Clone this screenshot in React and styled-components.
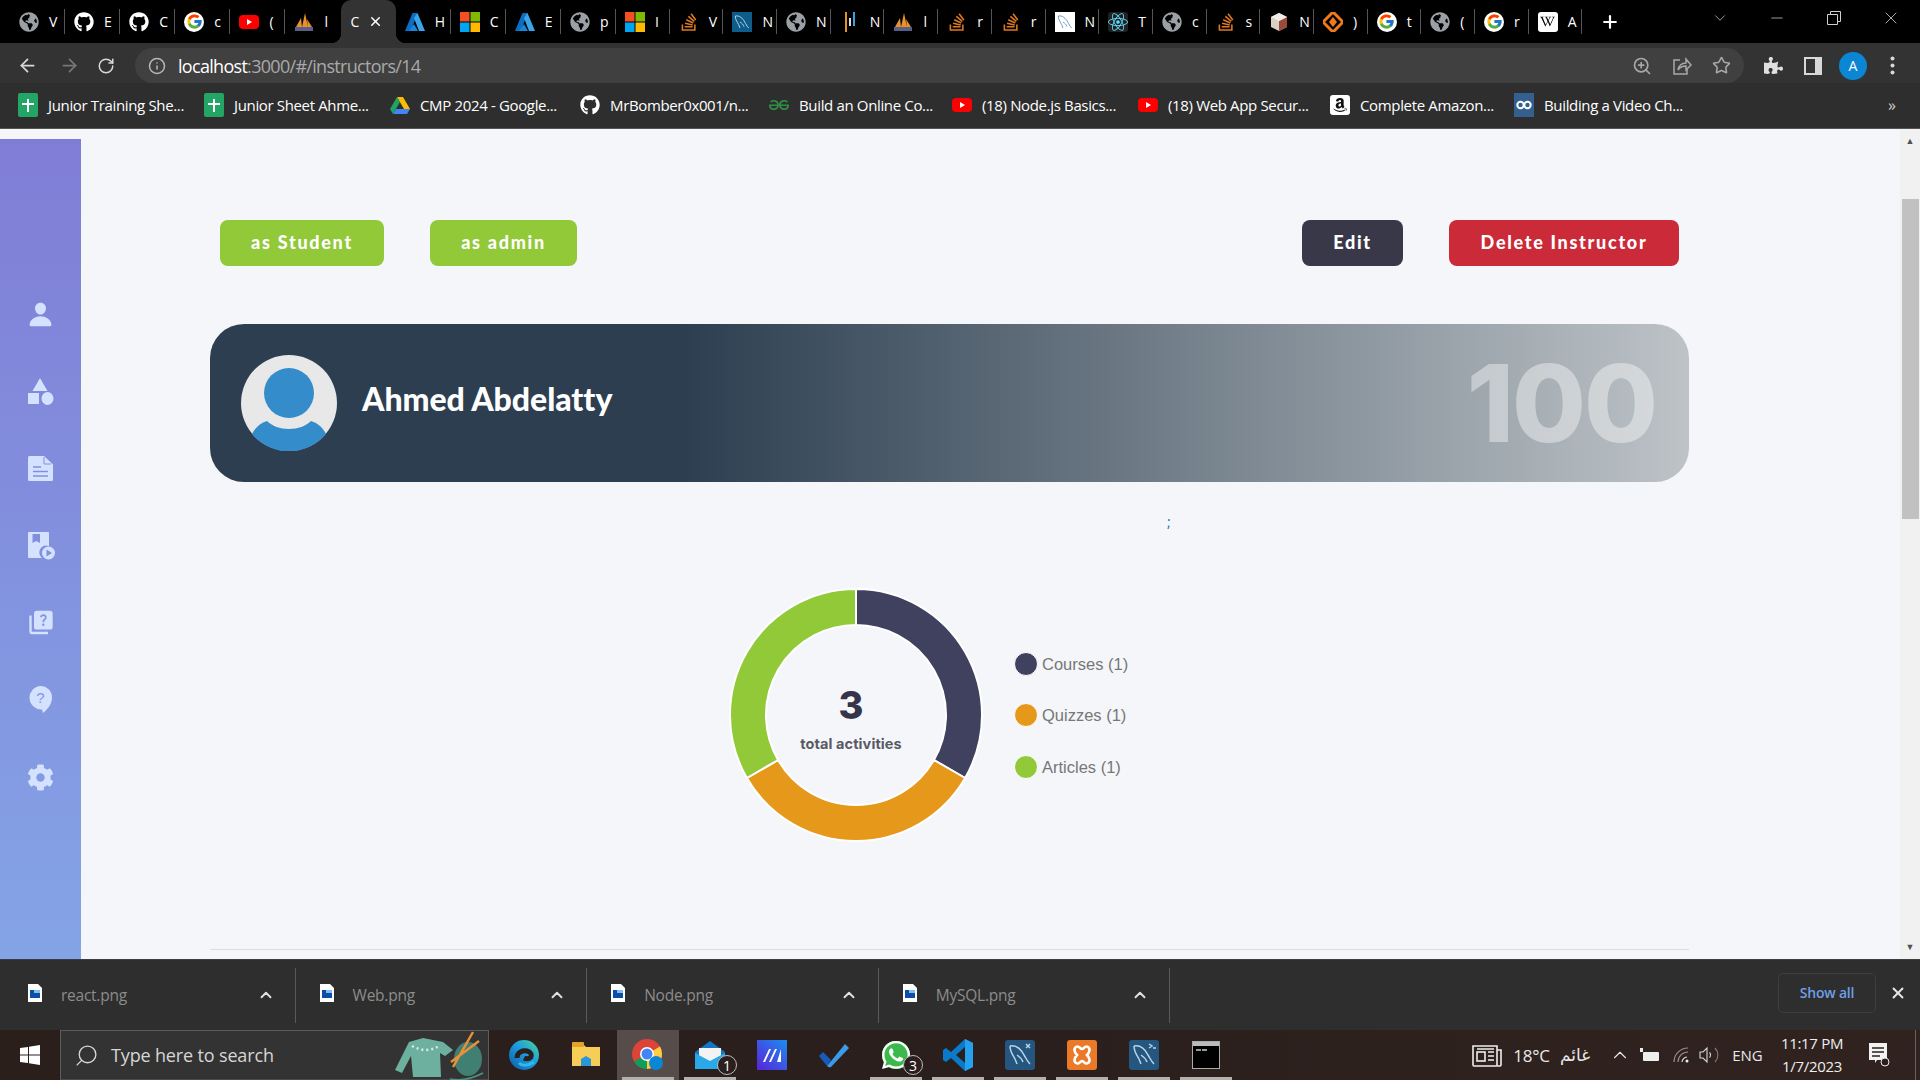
import React from 'react';
import styled, { createGlobalStyle } from 'styled-components';
import { ArrowLeft, ArrowRight, RotateCw, Info, ZoomIn, Star, Plus, X, ChevronDown, ChevronUp, Minus, Search } from 'lucide-react';
import { FaGithub, FaGlobeAmericas, FaStackOverflow, FaReact, FaWikipediaW, FaAmazon, FaPuzzlePiece, FaCog, FaWhatsapp } from 'react-icons/fa';
import { FcGoogle } from 'react-icons/fc';
import { SiGeeksforgeeks } from 'react-icons/si';
import { IoPerson } from 'react-icons/io5';
import { MdQuiz } from 'react-icons/md';

const GlobalStyle = createGlobalStyle`
  html, body { margin: 0; padding: 0; height: 100%; overflow: hidden; background: #f4f6fa; }
  * { box-sizing: border-box; }
`;

// ---------- browser chrome ----------
const Screen = styled.div`
  width: 1920px;
  height: 1080px;
  display: flex;
  flex-direction: column;
  overflow: hidden;
  font-family: 'Open Sans', 'Liberation Sans', sans-serif;
`;

const TabStrip = styled.div`
  height: 43px;
  background: #000;
  display: flex;
  padding-left: 10px;
  flex-shrink: 0;
  position: relative;
`;

const Tab = styled.div`
  width: ${(p) => p.$w || 55.1}px;
  height: 43px;
  display: flex;
  align-items: center;
  padding: 0 0 0 9px;
  gap: 10px;
  position: relative;
  color: #fff;
  font-size: 14px;
  flex-shrink: 0;
  &::after {
    content: '';
    display: ${(p) => (p.$noSep ? 'none' : 'block')};
    position: absolute;
    right: 0;
    top: 9px;
    bottom: 9px;
    width: 1px;
    background: #555;
  }
`;

const ActiveTab = styled(Tab)`
  background: #333;
  border-radius: 10px 10px 0 0;
  padding: 0 13px 0 10px;
  justify-content: space-between;
  gap: 0;
  &::before,
  &::after {
    content: '';
    display: block;
    position: absolute;
    top: auto;
    bottom: 0;
    width: 10px;
    height: 10px;
    background: none;
  }
  &::before {
    left: -10px;
    background: radial-gradient(circle at 0 0, transparent 10px, #333 10.5px);
  }
  &::after {
    right: -10px;
    background: radial-gradient(circle at 100% 0, transparent 10px, #333 10.5px);
  }
`;

const Favicon = styled.span`
  width: 20px;
  height: 20px;
  flex-shrink: 0;
  display: flex;
  align-items: center;
  justify-content: center;
  border-radius: ${(p) => p.$radius || 0};
  background: ${(p) => p.$bg || 'transparent'};
  color: ${(p) => p.$color || '#fff'};
  font-size: ${(p) => p.$size || 20}px;
`;

const TabLetter = styled.span`
  white-space: nowrap;
  line-height: 1;
`;

const NewTab = styled.div`
  width: 56px;
  display: flex;
  align-items: center;
  justify-content: center;
  color: #fff;
`;

const WindowControls = styled.div`
  margin-left: auto;
  display: flex;
  align-items: flex-start;
  color: #d0d0d0;
  padding-right: 1px;
`;

const WinButton = styled.div`
  width: 57px;
  height: 36px;
  display: flex;
  align-items: center;
  justify-content: center;
`;

const Toolbar = styled.div`
  height: 40px;
  background: #333;
  display: flex;
  align-items: flex-end;
  flex-shrink: 0;
  color: #d8d8d8;
`;

const NavButton = styled.div`
  width: ${(p) => p.$w || 41}px;
  height: 35px;
  display: flex;
  align-items: center;
  justify-content: center;
  color: ${(p) => p.$color || '#d8d8d8'};
`;

const UrlPill = styled.div`
  width: 1609px;
  height: 35px;
  margin-left: 7px;
  background: #404040;
  border-radius: 18px;
  display: flex;
  align-items: center;
  padding: 0 3px 0 13px;
`;

const UrlText = styled.div`
  margin-left: 12px;
  font-size: 18px;
  letter-spacing: -0.7px;
  color: #a9a9a9;
  flex: 1;
  line-height: 1;
  b { font-weight: 400; color: #fff; }
`;

const ToolbarEnd = styled.div`
  display: flex;
  padding-left: 9px;
`;

const Avatar = styled.div`
  width: 28px;
  height: 28px;
  border-radius: 50%;
  background: #0b86d4;
  color: #fff;
  font-size: 14px;
  display: flex;
  align-items: center;
  justify-content: center;
`;

const BookmarkBar = styled.div`
  height: 46px;
  background: #2e2e2e;
  border-bottom: 1px solid #555;
  display: flex;
  align-items: center;
  padding: 0 0 1px 18px;
  flex-shrink: 0;
  position: relative;
`;

const Bookmark = styled.div`
  width: ${(p) => p.$w}px;
  display: flex;
  align-items: center;
  gap: 10px;
  color: #fff;
  font-size: 15px;
  letter-spacing: -0.35px;
  white-space: nowrap;
  flex-shrink: 0;
`;

const OverflowMark = styled.div`
  margin-left: auto;
  margin-right: 24px;
  color: #ccc;
  font-size: 16px;
`;

// ---------- page ----------
const PageArea = styled.div`
  flex: 1;
  min-height: 0;
  display: flex;
  background: #f4f6fa;
`;

const Sidebar = styled.nav`
  width: 81px;
  margin-top: 10px;
  flex-shrink: 0;
  background: linear-gradient(180deg, #807dd6 0%, #84a4e6 100%);
  display: flex;
  flex-direction: column;
  align-items: center;
  padding-top: 161px;
  gap: 49.2px;
  color: #d4e2ff;
`;

const SideIcon = styled.div`
  width: 28px;
  height: 28px;
  display: flex;
  align-items: center;
  justify-content: center;
  font-size: ${(p) => p.$size || 27}px;
`;

const Content = styled.main`
  flex: 1;
  min-width: 0;
  padding: 91px 211px 0 129px;
  display: flex;
  flex-direction: column;
  overflow: hidden;
`;

const ButtonRow = styled.div`
  display: flex;
  padding: 0 10px;
  gap: 46px;
`;

const ActionButton = styled.button`
  height: 46px;
  width: ${(p) => p.$w}px;
  margin-left: ${(p) => (p.$push ? 'auto' : '0')};
  border: none;
  border-radius: 8px;
  background: ${(p) => p.$bg};
  color: #fff;
  font-family: 'Lato', sans-serif;
  font-weight: 900;
  font-size: 18px;
  letter-spacing: 1.7px;
  padding: 0 0 2px;
`;

const Banner = styled.section`
  margin-top: 58px;
  height: 158px;
  flex-shrink: 0;
  border-radius: 34px;
  background: linear-gradient(90deg, #2c3e50 32%, #bdc3c7 100%);
  display: flex;
  align-items: center;
  padding: 0 33px 0 31px;
`;

const BannerAvatar = styled.svg`
  width: 96px;
  height: 96px;
  flex-shrink: 0;
`;

const BannerName = styled.h1`
  margin: 0 0 9px 25px;
  font-family: 'Lato', sans-serif;
  font-weight: 900;
  font-size: 32px;
  letter-spacing: -0.05px;
  color: #fff;
`;

const BannerScore = styled.div`
  margin-left: auto;
  font-family: 'Inter', sans-serif;
  font-weight: 800;
  font-size: 107px;
  line-height: 1;
  letter-spacing: -2px;
  color: rgba(255, 255, 255, 0.4);
`;

const StrayMark = styled.div`
  margin-top: 32px;
  height: 16px;
  padding-left: 957px;
  font-size: 14px;
  line-height: 16px;
  color: #1a6fa8;
`;

const ChartRow = styled.div`
  margin-top: 57px;
  padding-left: 518px;
  display: flex;
  align-items: center;
`;

const DonutWrap = styled.div`
  width: 256px;
  height: 256px;
  position: relative;
  flex-shrink: 0;
`;

const DonutCenter = styled.div`
  position: absolute;
  left: 0;
  right: 10px;
  top: 96px;
  display: flex;
  flex-direction: column;
  align-items: center;
`;

const DonutTotal = styled.div`
  font-family: 'Inter', sans-serif;
  font-weight: 800;
  font-size: 38px;
  line-height: 44px;
  color: #36344a;
`;

const DonutCaption = styled.div`
  margin-top: 8px;
  font-family: 'Inter', sans-serif;
  font-weight: 700;
  font-size: 14.5px;
  letter-spacing: 0.1px;
  line-height: 18px;
  color: #5a5a66;
`;

const Legend = styled.div`
  margin: 0 0 0 30px;
  display: flex;
  flex-direction: column;
  gap: 27.5px;
`;

const LegendItem = styled.div`
  display: flex;
  align-items: center;
  gap: 4px;
  font-family: 'Liberation Sans', sans-serif;
  font-size: 16.5px;
  line-height: 24px;
  color: #777;
`;

const LegendDot = styled.span`
  width: 24px;
  height: 24px;
  border-radius: 50%;
  border: 1px solid #fff;
  background: ${(p) => p.$color};
`;

const Divider = styled.hr`
  margin: 106px 0 0;
  border: none;
  border-top: 1px solid #dcdee3;
  flex-shrink: 0;
`;

const Scrollbar = styled.div`
  width: 20px;
  flex-shrink: 0;
  background: #f1f1f1;
  display: flex;
  flex-direction: column;
  align-items: center;
`;

const ScrollArrow = styled.div`
  height: ${(p) => p.$h}px;
  display: flex;
  align-items: ${(p) => (p.$end ? 'flex-end' : 'flex-start')};
  padding: ${(p) => (p.$end ? '0 0 8px' : '7px 0 0')};
  color: #505050;
  font-size: 9px;
  line-height: 1;
`;

const ScrollThumb = styled.div`
  width: 17px;
  height: 320px;
  background: #c1c1c1;
  flex-shrink: 0;
`;

// ---------- downloads shelf ----------
const DownloadBar = styled.div`
  height: 71px;
  background: #2e2e2e;
  border-top: 1px solid #3e3e3e;
  display: flex;
  align-items: center;
  padding-left: 4px;
  flex-shrink: 0;
`;

const DownloadItem = styled.div`
  width: 291.6px;
  height: 55px;
  border-right: 1px solid #5a5a5a;
  display: flex;
  align-items: center;
  padding: 0 20px 0 24px;
  color: #8c8c8c;
  font-size: 15.5px;
  letter-spacing: -0.25px;
`;

const DownloadName = styled.span`
  margin-left: 19px;
  flex: 1;
`;

const FileGlyph = styled.svg`
  width: 14px;
  height: 18px;
  margin-top: -4px;
  flex-shrink: 0;
`;

const ShowAll = styled.div`
  margin-left: auto;
  width: 98px;
  height: 40px;
  margin-top: -5px;
  border: 1px solid #3e3e3e;
  border-radius: 5px;
  display: flex;
  align-items: center;
  justify-content: center;
  color: #6f9fe8;
  font-size: 14px;
  font-weight: 600;
  letter-spacing: -0.2px;
`;

const ShelfClose = styled.div`
  width: 44px;
  margin-top: -5px;
  display: flex;
  justify-content: center;
  color: #e6e6e6;
`;

// ---------- windows taskbar ----------
const Taskbar = styled.div`
  height: 50px;
  background: linear-gradient(90deg, #2b1f1c 0%, #2b1f1d 50%, #30231f 100%);
  display: flex;
  align-items: stretch;
  flex-shrink: 0;
  color: #eee;
`;

const StartButton = styled.div`
  width: 60px;
  display: flex;
  align-items: center;
  justify-content: center;
`;

const SearchBox = styled.div`
  width: 429px;
  background: #333;
  border: 1px solid #5c5c5c;
  border-bottom-color: #4a4a4a;
  display: flex;
  align-items: center;
  padding-left: 13px;
  color: #d6d6d6;
  font-size: 18px;
  letter-spacing: -0.15px;
  position: relative;
`;

const SearchLabel = styled.span`
  margin-left: 12px;
`;

const SearchArt = styled.svg`
  margin-left: auto;
  margin-right: 3px;
  width: 92px;
  height: 50px;
`;

const TaskSlots = styled.div`
  display: flex;
  margin-left: 4px;
`;

const TaskSlot = styled.div`
  width: 62px;
  display: flex;
  align-items: center;
  justify-content: center;
  position: relative;
  background: ${(p) => (p.$active ? '#564c4a' : 'transparent')};
  &::after {
    content: '';
    display: ${(p) => (p.$open ? 'block' : 'none')};
    position: absolute;
    bottom: 0;
    left: 5px;
    right: 5px;
    height: 3px;
    background: #b3b0ae;
  }
`;

const TaskBadge = styled.span`
  position: absolute;
  right: 4px;
  bottom: 5px;
  width: 20px;
  height: 20px;
  border-radius: 50%;
  background: #2b1f1d;
  border: 1px solid #bbb;
  color: #fff;
  font-size: 14px;
  display: flex;
  align-items: center;
  justify-content: center;
`;

const WhatsappMark = styled.span`
  width: 32px;
  height: 32px;
  border-radius: 50%;
  display: flex;
  align-items: center;
  justify-content: center;
  color: #fff;
  background: radial-gradient(circle, #3cb94c 0 62%, transparent 64%);
`;

const Tray = styled.div`
  margin-left: auto;
  display: flex;
  align-items: center;
  border-right: 1px solid #6b6260;
  margin-right: 4px;
  font-size: 15px;
`;

const TrayItem = styled.div`
  display: flex;
  align-items: center;
  justify-content: center;
  width: ${(p) => p.$w}px;
  margin-left: ${(p) => p.$ml || 0}px;
  color: #e8e8e8;
  white-space: nowrap;
`;

const Temperature = styled(TrayItem)`
  font-size: 17px;
  letter-spacing: -0.2px;
`;

const WeatherWord = styled.span`
  font-family: 'DejaVu Sans', sans-serif;
  font-size: 17px;
`;

const Clock = styled.div`
  display: flex;
  flex-direction: column;
  align-items: center;
  gap: 4px;
  width: 62px;
  margin-left: 13.5px;
  font-size: 15px;
  letter-spacing: -0.3px;
  line-height: 19px;
  white-space: nowrap;
`;

// ---------- drawn icons ----------
const MsGrid = () => (
  <svg width="20" height="20" viewBox="0 0 20 20">
    <rect width="9.5" height="9.5" fill="#f25022" />
    <rect x="10.5" width="9.5" height="9.5" fill="#7fba00" />
    <rect y="10.5" width="9.5" height="9.5" fill="#00a4ef" />
    <rect x="10.5" y="10.5" width="9.5" height="9.5" fill="#ffb900" />
  </svg>
);

const Azure = () => (
  <svg width="20" height="20" viewBox="0 0 20 20">
    <path d="M7.5 1h5L6 19H0z" fill="#0a6fc2" />
    <path d="M12.5 1 20 19h-6L9 6z" fill="#3aa5ea" />
    <path d="M9 12l4 7H4z" fill="#1887d8" />
  </svg>
);

const Pma = () => (
  <svg width="20" height="20" viewBox="0 0 20 20">
    <path d="M2 15 7 6l1 9zM8 15l3-14 3 14zM14 15l-1-8 5 8z" fill="#e8912d" />
    <rect x="1" y="15" width="18" height="4" fill="#5a5f8a" />
  </svg>
);

const Bars = () => (
  <svg width="20" height="20" viewBox="0 0 20 20">
    <rect x="5" y="0" width="2" height="20" fill="#e3932a" />
    <rect x="9" y="6" width="2" height="8" fill="#dddddd" />
    <rect x="13" y="0" width="2" height="14" fill="#3aa0d8" />
  </svg>
);

const Diamond = () => (
  <svg width="20" height="20" viewBox="0 0 20 20">
    <path d="M10 0 20 10 10 20 0 10z" fill="none" stroke="#f27a1a" strokeWidth="3" />
    <path d="M10 5 14 10 10 15 6 10z" fill="#f27a1a" />
  </svg>
);

const PackageBox = () => (
  <svg width="20" height="20" viewBox="0 0 20 20">
    <path d="M10 1 18 5v10l-8 4-8-4V5z" fill="#d8cfc6" />
    <path d="M10 9v10l8-4V5z" fill="#9a4a3a" />
    <path d="M2 5l8 4 8-4-8-4z" fill="#f0ece6" />
  </svg>
);

const YouTube = () => (
  <svg width="20" height="20" viewBox="0 0 20 20">
    <rect x="0" y="3" width="20" height="14" rx="4" fill="#f00" />
    <path d="M8 7l5 3-5 3z" fill="#fff" />
  </svg>
);

const Sheets = () => (
  <svg width="20" height="24" viewBox="0 0 20 24">
    <rect width="20" height="24" rx="2" fill="#23a566" />
    <path d="M9 6h2v4h5v2h-5v7H9v-7H4v-2h5z" fill="#fff" />
  </svg>
);

const Drive = () => (
  <svg width="20" height="20" viewBox="0 0 20 20">
    <path d="M7 2h6l7 12h-6z" fill="#fbbc04" />
    <path d="M7 2 0 14l3 5 7-12z" fill="#1fa463" />
    <path d="M3 19h14l3-5H6z" fill="#4285f4" />
  </svg>
);

const Infinity2 = () => (
  <svg width="20" height="24" viewBox="0 0 20 24">
    <rect width="20" height="24" fill="#34608f" />
    <circle cx="6.5" cy="12" r="3.2" fill="none" stroke="#fff" strokeWidth="2" />
    <circle cx="13.5" cy="12" r="3.2" fill="none" stroke="#fff" strokeWidth="2" />
  </svg>
);

const ShareIcon = () => (
  <svg width="20" height="20" viewBox="0 0 20 20" fill="none" stroke="#a8a8a8" strokeWidth="1.5">
    <path d="M8 4H2v14h13v-5" />
    <path d="M6 14c1-5 4-7 8-7V3l5 6-5 5v-4c-3 0-6 1-8 4z" />
  </svg>
);

const SidePanel = () => (
  <svg width="18" height="18" viewBox="0 0 18 18">
    <rect x="1" y="1" width="16" height="16" fill="none" stroke="#d8d8d8" strokeWidth="2" />
    <rect x="11" y="1" width="6" height="16" fill="#d8d8d8" />
  </svg>
);

const ShapesIcon = () => (
  <svg width="26" height="27" viewBox="0 0 26 27" fill="currentColor">
    <path d="M12 0l7.5 13h-15z" />
    <rect x="0" y="15" width="11" height="11" />
    <ellipse cx="19.5" cy="20.5" rx="6" ry="6.5" />
  </svg>
);

const PageIcon = () => (
  <svg width="25" height="25" viewBox="0 0 25 25">
    <path d="M1.5 0H16l9 8.5V23.5a1.5 1.5 0 0 1-1.5 1.5h-22A1.5 1.5 0 0 1 0 23.5v-22A1.5 1.5 0 0 1 1.5 0z" fill="currentColor" />
    <path d="M16 1v7h7" fill="none" stroke="#8090dd" strokeWidth="1" />
    <path d="M5 11h8M5 15.5h15M5 20h15" stroke="#8090dd" strokeWidth="1.6" />
  </svg>
);

const BookPlay = () => (
  <svg width="28" height="28" viewBox="0 0 28 28">
    <path d="M2 0h19a1 1 0 0 1 1 1v13a7 7 0 0 0-7 12H2a1 1 0 0 1-1-1V1a1 1 0 0 1 1-1z" fill="currentColor" />
    <path d="M5.5 2h7.5v9l-3.7-2-3.8 2z" fill="#8090dd" />
    <circle cx="21.5" cy="21" r="6.5" fill="currentColor" />
    <path d="M19.5 17.5 25 21l-5.5 3.5z" fill="#8090dd" />
  </svg>
);

const QuestionBubble = () => (
  <svg width="24" height="28" viewBox="0 0 24 28">
    <path d="M11.5 0a11.5 11.5 0 0 1 11.5 11.5c0 7-5 12.5-9 15.5l-1-3.6a11.5 11.5 0 1 1-1.5-23.4z" fill="currentColor" />
    <text x="11.5" y="17" textAnchor="middle" fontSize="15" fontFamily="Liberation Sans, sans-serif" fill="#8097e0">?</text>
  </svg>
);

const AvatarArt = () => (
  <BannerAvatar viewBox="0 0 96 96">
    <circle cx="48" cy="48" r="48" fill="#e8e8e8" />
    <ellipse cx="48" cy="38" rx="25" ry="25" fill="#358ccb" />
    <path d="M11 79c3-6 8-11 15-13 5 5 13 8 22 8s17-3 22-8c7 2 12 7 15 13a48 48 0 0 1-74 0z" fill="#358ccb" />
  </BannerAvatar>
);

const WindowsLogo = () => (
  <svg width="20" height="20" viewBox="0 0 20 20" fill="#fff">
    <path d="M0 3l8-1v7.5H0zM9 1.8 20 0v9.5H9zM0 10.5h8V18l-8-1zM9 10.5h11V20L9 18.2z" />
  </svg>
);

const SweaterArt = () => (
  <SearchArt viewBox="0 0 92 50">
    <path d="M2 40 16 12l14-4 5 1 15 3 10 8-8 6-5-3 1 24H20l-2-21-9 17z" fill="#6db09f" />
    <path d="M19 16q14 8 27 0" fill="none" stroke="#d8ece6" strokeWidth="2.5" strokeDasharray="2 3" />
    <ellipse cx="75" cy="29" rx="14" ry="17" fill="#417f72" />
    <path d="M60 37 80 2M58 32 86 11" stroke="#e8913a" strokeWidth="2.5" />
    <path d="M57 49q16 3 33-6" fill="none" stroke="#4d9485" strokeWidth="1.5" />
  </SearchArt>
);

const EdgeLogo = () => (
  <svg width="30" height="30" viewBox="0 0 30 30">
    <defs>
      <linearGradient id="edgeG" x1="0" y1="1" x2="1" y2="0">
        <stop offset="0" stopColor="#0c59a4" />
        <stop offset="0.55" stopColor="#1b9de2" />
        <stop offset="1" stopColor="#4ad98f" />
      </linearGradient>
    </defs>
    <circle cx="15" cy="15" r="15" fill="url(#edgeG)" />
    <path d="M8 18c0-6 6-8 10-7 4 1 5 4 4 6-2 2-5 2-7 1" fill="none" stroke="#2b1f1d" strokeWidth="5" />
    <path d="M10 23c3 3 9 3 15-1" fill="none" stroke="#34b6e8" strokeWidth="3" />
  </svg>
);

const FolderLogo = () => (
  <svg width="28" height="26" viewBox="0 0 28 26">
    <path d="M0 2h11l3 3h14v19H0z" fill="#f6cd57" />
    <rect y="0" width="12" height="5" rx="1" fill="#e0a526" />
    <path d="M9 24v-7l5-3 5 3v7z" fill="#2b97d8" />
  </svg>
);

const ChromeLogo = () => (
  <svg width="32" height="32" viewBox="0 0 32 32">
    <circle cx="15" cy="15" r="15" fill="#db4437" />
    <path d="M15 15 2 22.5A15 15 0 0 0 15 30z" fill="#0f9d58" />
    <path d="M15 15v15a15 15 0 0 0 15-15 15 15 0 0 0-2-7.5z" fill="#ffcd40" />
    <circle cx="15" cy="15" r="7" fill="#fff" />
    <circle cx="15" cy="15" r="5.5" fill="#4285f4" />
    <circle cx="24" cy="24" r="7" fill="#0b86d4" />
  </svg>
);

const MailLogo = () => (
  <svg width="30" height="28" viewBox="0 0 30 28">
    <path d="M0 11 15 0l15 11v17H0z" fill="#1276c4" />
    <path d="M4 7h22v8l-11 6-11-6z" fill="#f3f3f3" />
    <path d="M0 12l15 8 15-8v16H0z" fill="#29a8ea" />
  </svg>
);

const MaLogo = () => (
  <svg width="30" height="30" viewBox="0 0 30 30">
    <defs>
      <linearGradient id="maG" x1="0" y1="1" x2="1" y2="0">
        <stop offset="0" stopColor="#5a22d8" />
        <stop offset="1" stopColor="#1c8cf0" />
      </linearGradient>
    </defs>
    <rect width="30" height="30" fill="url(#maG)" />
    <path d="M6 22 12 9h2L8 22zM12 22l6-13h2l-6 13zM20 22l4-13v13z" fill="#fff" />
  </svg>
);

const TodoLogo = () => (
  <svg width="30" height="26" viewBox="0 0 30 26">
    <path d="M0 14 4 10l8 8-4 6z" fill="#195abd" />
    <path d="M8 24 26 2l4 4-18 19q-2 1-4-1z" fill="#3a9be8" />
  </svg>
);

const VsCodeLogo = () => (
  <svg width="30" height="32" viewBox="0 0 30 32">
    <path d="M22 0 30 4v24l-8 4L8 19l-5 4-3-2v-10l3-2 5 4z" fill="#0a7acb" />
    <path d="M22 8 13 16l9 8z" fill="#2b1f1d" />
    <path d="M22 0 30 4v24l-8 4z" fill="#24a0ed" />
  </svg>
);

// dolphin outline, shared by the tab favicons and the taskbar tiles
const Dolphin = ({ stroke = '#b9d3e6', children }) => (
  <svg width="100%" height="100%" viewBox="0 0 30 30" fill="none" stroke={stroke} strokeWidth="1.5">
    <path d="M5 6c6-1 11 3 14 9 2 3 3 6 6 9" />
    <path d="M5 6c0 6 3 9 5 13l2 5M12 15c3 2 5 4 6 7" />
    {children}
  </svg>
);

const MysqlTile = ({ children }) => (
  <svg width="30" height="30" viewBox="0 0 30 30">
    <rect width="30" height="30" rx="3" fill="#24567f" />
    <svg x="0" y="0" width="30" height="30"><Dolphin>{children}</Dolphin></svg>
  </svg>
);

const XamppLogo = () => (
  <svg width="30" height="30" viewBox="0 0 30 30">
    <rect width="30" height="30" rx="3" fill="#ea7a27" />
    <path d="M9 7c3-2 4 2 6 2s3-4 6-2 1 6-1 8c2 2 4 6 1 8s-4-2-6-2-3 4-6 2-1-6 1-8c-2-2-4-6-1-8z" fill="none" stroke="#fff" strokeWidth="2.6" />
  </svg>
);

const CmdLogo = () => (
  <svg width="28" height="28" viewBox="0 0 28 28">
    <rect width="28" height="28" fill="#000" stroke="#aaa" strokeWidth="2" />
    <rect x="1" y="1" width="26" height="4" fill="#bbb" />
    <path d="M4 9h5M10 9h5" stroke="#ccc" strokeWidth="1.5" />
  </svg>
);

const NewsIcon = () => (
  <svg width="30" height="24" viewBox="0 0 30 24" fill="none" stroke="#eee" strokeWidth="1.6">
    <path d="M1 3h24v19a1 1 0 0 1-1 1H2a1 1 0 0 1-1-1z" />
    <path d="M25 7h4v15a1 1 0 0 1-1 1h-3" />
    <rect x="5" y="9" width="8" height="9" />
    <path d="M16 9h6M16 13h6M16 17h6M5 6h17" />
  </svg>
);

const BatteryIcon = () => (
  <svg width="20" height="14" viewBox="0 0 20 14">
    <rect x="4" y="4" width="16" height="9" rx="1" fill="#eee" />
    <path d="M1 0h3v4H1z" fill="#eee" />
  </svg>
);

const WifiIcon = () => (
  <svg width="16" height="16" viewBox="0 0 16 16" fill="none" stroke="#d8d8d8" strokeWidth="1.2">
    <path d="M1 15A14 14 0 0 1 15 1M5 15A10 10 0 0 1 15 5" opacity="0.6" />
    <path d="M9 15a6 6 0 0 1 5-5" />
    <circle cx="14" cy="14" r="1.5" fill="#eee" stroke="none" />
  </svg>
);

const SpeakerIcon = () => (
  <svg width="20" height="20" viewBox="0 0 20 20" fill="none" stroke="#d8d8d8" strokeWidth="1.1">
    <path d="M1 7h3l4-4v14l-4-4H1z" />
    <path d="M10.5 7.5a3.5 3.5 0 0 1 0 5" />
    <path d="M16 3a10 10 0 0 1 0 14" opacity="0.5" />
  </svg>
);

const NoteIcon = () => (
  <svg width="22" height="26" viewBox="0 0 22 26">
    <path d="M1 1h18v17h-10l-2 3v-3H1z" fill="#f2f2f2" />
    <path d="M4 6h12M4 10h12M4 14h8" stroke="#2b1f1d" strokeWidth="1.4" />
    <circle cx="17" cy="20" r="4" fill="#2b1f1d" stroke="#eee" />
  </svg>
);

const FileIcon = () => (
  <FileGlyph viewBox="0 0 14 18">
    <path d="M0 0h10l4 4v14H0z" fill="#fff" />
    <rect x="2" y="6" width="10" height="8" fill="#0d4ea6" />
    <rect x="6" y="6" width="6" height="3" fill="#7cc0f0" />
  </FileGlyph>
);

// ---------- data ----------
const globe = <Favicon $color="#9aa0a6"><FaGlobeAmericas /></Favicon>;
const github = <Favicon><FaGithub /></Favicon>;
const google = <Favicon $bg="#fff" $radius="50%" $size={17}><FcGoogle /></Favicon>;
const so = <Favicon $color="#e07a1f"><FaStackOverflow /></Favicon>;

const tabsBefore = [
  [globe, 'V'], [github, 'E'], [github, 'C'], [google, 'c'],
  [<Favicon><YouTube /></Favicon>, '('], [<Favicon><Pma /></Favicon>, 'l'],
];

const tabsAfter = [
  [<Favicon><Azure /></Favicon>, 'H'], [<Favicon><MsGrid /></Favicon>, 'C'], [<Favicon><Azure /></Favicon>, 'E'],
  [globe, 'p'], [<Favicon><MsGrid /></Favicon>, 'I'], [so, 'V'],
  [<Favicon $bg="#0d5c8a"><Dolphin /></Favicon>, 'N'],
  [globe, 'N'], [<Favicon><Bars /></Favicon>, 'N'], [<Favicon><Pma /></Favicon>, 'l'],
  [so, 'r'], [so, 'r'],
  [<Favicon $bg="#fff"><Dolphin stroke="#6d9cbb" /></Favicon>, 'N'],
  [<Favicon $bg="#222" $color="#61dafb" $radius="3px"><FaReact /></Favicon>, 'T'],
  [globe, 'c'], [so, 's'], [<Favicon><PackageBox /></Favicon>, 'N'],
  [<Favicon><Diamond /></Favicon>, ')'], [google, 't'], [globe, '('], [google, 'r'],
  [<Favicon $bg="#fff" $color="#000" $radius="3px" $size={15}><FaWikipediaW /></Favicon>, 'A'],
];

const bookmarks = [
  [<Sheets />, 'Junior Training She...', 186],
  [<Sheets />, 'Junior Sheet Ahme...', 186],
  [<Drive />, 'CMP 2024 - Google...', 190],
  [<Favicon><FaGithub /></Favicon>, 'MrBomber0x001/n...', 189],
  [<Favicon $color="#2f8d46"><SiGeeksforgeeks /></Favicon>, 'Build an Online Co...', 183],
  [<YouTube />, '(18) Node.js Basics...', 186],
  [<YouTube />, '(18) Web App Secur...', 192],
  [<Favicon $bg="#fff" $color="#111" $radius="3px" $size={16}><FaAmazon /></Favicon>, 'Complete Amazon...', 184],
  [<Infinity2 />, 'Building a Video Ch...', 200],
];

const sideIcons = [
  [<IoPerson />, 27], [<ShapesIcon />], [<PageIcon />], [<BookPlay />], [<MdQuiz />, 33], [<QuestionBubble />], [<FaCog />, 27],
];

const activities = [
  { label: 'Courses (1)', color: '#40405f' },
  { label: 'Quizzes (1)', color: '#e6981a' },
  { label: 'Articles (1)', color: '#91c938' },
];

const downloads = ['react.png', 'Web.png', 'Node.png', 'MySQL.png'];

const arcPath = (startDeg, endDeg, cx, cy, r, ri) => {
  const pt = (deg, rad) => {
    const a = ((deg - 90) * Math.PI) / 180;
    return `${(cx + rad * Math.cos(a)).toFixed(2)} ${(cy + rad * Math.sin(a)).toFixed(2)}`;
  };
  return `M${pt(startDeg, r)} A${r} ${r} 0 0 1 ${pt(endDeg, r)} L${pt(endDeg, ri)} A${ri} ${ri} 0 0 0 ${pt(startDeg, ri)} Z`;
};

const App = () => (
  <Screen>
    <GlobalStyle />
    <TabStrip>
      {tabsBefore.map(([icon, letter], i) => (
        <Tab key={i} $noSep={i === 5}>{icon}<TabLetter>{letter}</TabLetter></Tab>
      ))}
      <ActiveTab>
        <TabLetter>C</TabLetter>
        <X size={15} strokeWidth={2.4} />
      </ActiveTab>
      {tabsAfter.map(([icon, letter], i) => (
        <Tab key={i} $w={i < 4 ? 55.1 : 53.7}>{icon}<TabLetter>{letter}</TabLetter></Tab>
      ))}
      <NewTab><Plus size={20} strokeWidth={2.6} /></NewTab>
      <WindowControls>
        <WinButton><ChevronDown size={18} strokeWidth={1} /></WinButton>
        <WinButton><Minus size={18} strokeWidth={1} /></WinButton>
        <WinButton>
          <svg width="14" height="14" viewBox="0 0 14 14" fill="none" stroke="#d0d0d0">
            <path d="M.5 3.5h10v10H.5zM3.5 3V.5h10v10H11" />
          </svg>
        </WinButton>
        <WinButton><X size={20} strokeWidth={1} /></WinButton>
      </WindowControls>
    </TabStrip>

    <Toolbar>
      <NavButton $w={54}><ArrowLeft size={21} /></NavButton>
      <NavButton $w={30} $color="#777"><ArrowRight size={21} /></NavButton>
      <NavButton $w={44}><RotateCw size={18} /></NavButton>
      <UrlPill>
        <Info size={18} color="#b8b8b8" />
        <UrlText><b>localhost</b>:3000/#/instructors/14</UrlText>
        <NavButton $w={41} $color="#a8a8a8"><ZoomIn size={20} /></NavButton>
        <NavButton $w={39}><ShareIcon /></NavButton>
        <NavButton $w={40} $color="#a8a8a8"><Star size={19} /></NavButton>
      </UrlPill>
      <ToolbarEnd>
        <NavButton $w={40} $color="#e0e0e0"><FaPuzzlePiece size={19} /></NavButton>
        <NavButton $w={40}><SidePanel /></NavButton>
        <NavButton $w={40}><Avatar>A</Avatar></NavButton>
        <NavButton $w={38}>
          <svg width="5" height="19" viewBox="0 0 5 19" fill="#d8d8d8"><circle cx="2.5" cy="2.5" r="2" /><circle cx="2.5" cy="9.5" r="2" /><circle cx="2.5" cy="16.5" r="2" /></svg>
        </NavButton>
      </ToolbarEnd>
    </Toolbar>

    <BookmarkBar>
      {bookmarks.map(([icon, label, w], i) => (
        <Bookmark key={i} $w={w}>{icon}<span>{label}</span></Bookmark>
      ))}
      <OverflowMark>»</OverflowMark>
    </BookmarkBar>

    <PageArea>
      <Sidebar>
        {sideIcons.map(([icon, size], i) => <SideIcon key={i} $size={size}>{icon}</SideIcon>)}
      </Sidebar>
      <Content>
        <ButtonRow>
          <ActionButton $bg="#91c938" $w={164}>as Student</ActionButton>
          <ActionButton $bg="#91c938" $w={147}>as admin</ActionButton>
          <ActionButton $bg="#393849" $w={101} $push>Edit</ActionButton>
          <ActionButton $bg="#cb2a38" $w={230}>Delete Instructor</ActionButton>
        </ButtonRow>
        <Banner>
          <AvatarArt />
          <BannerName>Ahmed Abdelatty</BannerName>
          <BannerScore>100</BannerScore>
        </Banner>
        <StrayMark>;</StrayMark>
        <ChartRow>
          <DonutWrap>
            <svg width="256" height="256" viewBox="0 0 256 256">
              {activities.map((a, i) => (
                <path key={a.label} d={arcPath(i * 120, (i + 1) * 120, 128, 128, 126, 90)} fill={a.color} stroke="#fff" strokeWidth="2" />
              ))}
            </svg>
            <DonutCenter>
              <DonutTotal>3</DonutTotal>
              <DonutCaption>total activities</DonutCaption>
            </DonutCenter>
          </DonutWrap>
          <Legend>
            {activities.map((a) => (
              <LegendItem key={a.label}><LegendDot $color={a.color} />{a.label}</LegendItem>
            ))}
          </Legend>
        </ChartRow>
        <Divider />
      </Content>
      <Scrollbar>
        <ScrollArrow $h={70}>▲</ScrollArrow>
        <ScrollThumb />
        <ScrollArrow $h={440} $end>▼</ScrollArrow>
      </Scrollbar>
    </PageArea>

    <DownloadBar>
      {downloads.map((name) => (
        <DownloadItem key={name}>
          <FileIcon />
          <DownloadName>{name}</DownloadName>
          <ChevronUp size={18} color="#e0e0e0" strokeWidth={2.5} />
        </DownloadItem>
      ))}
      <ShowAll>Show all</ShowAll>
      <ShelfClose><X size={18} strokeWidth={2.5} /></ShelfClose>
    </DownloadBar>

    <Taskbar>
      <StartButton><WindowsLogo /></StartButton>
      <SearchBox>
        <Search size={25} strokeWidth={1.3} style={{ transform: 'scaleX(-1)' }} />
        <SearchLabel>Type here to search</SearchLabel>
        <SweaterArt />
      </SearchBox>
      <TaskSlots>
        <TaskSlot><EdgeLogo /></TaskSlot>
        <TaskSlot><FolderLogo /></TaskSlot>
        <TaskSlot $active $open><ChromeLogo /></TaskSlot>
        <TaskSlot $open><MailLogo /><TaskBadge>1</TaskBadge></TaskSlot>
        <TaskSlot><MaLogo /></TaskSlot>
        <TaskSlot><TodoLogo /></TaskSlot>
        <TaskSlot $open><WhatsappMark><FaWhatsapp size={32} /></WhatsappMark><TaskBadge>3</TaskBadge></TaskSlot>
        <TaskSlot $open><VsCodeLogo /></TaskSlot>
        <TaskSlot $open><MysqlTile><path d="M21 4l4 4M25 4l-4 4" /></MysqlTile></TaskSlot>
        <TaskSlot $open><XamppLogo /></TaskSlot>
        <TaskSlot $open><MysqlTile><path d="M20 4l3 2-3 2M24 8h3" /></MysqlTile></TaskSlot>
        <TaskSlot $open><CmdLogo /></TaskSlot>
      </TaskSlots>
      <Tray>
        <TrayItem $w={36}><NewsIcon /></TrayItem>
        <Temperature $w={53}>18°C</Temperature>
        <TrayItem $w={34}><WeatherWord>غائم</WeatherWord></TrayItem>
        <TrayItem $w={22} $ml={17}><ChevronUp size={24} strokeWidth={1.2} /></TrayItem>
        <TrayItem $w={36}><BatteryIcon /></TrayItem>
        <TrayItem $w={28}><WifiIcon /></TrayItem>
        <TrayItem $w={28}><SpeakerIcon /></TrayItem>
        <TrayItem $w={40} $ml={4.5}>ENG</TrayItem>
        <Clock><span>11:17 PM</span><span>1/7/2023</span></Clock>
        <TrayItem $w={72}><NoteIcon /></TrayItem>
      </Tray>
    </Taskbar>
  </Screen>
);

export default App;
